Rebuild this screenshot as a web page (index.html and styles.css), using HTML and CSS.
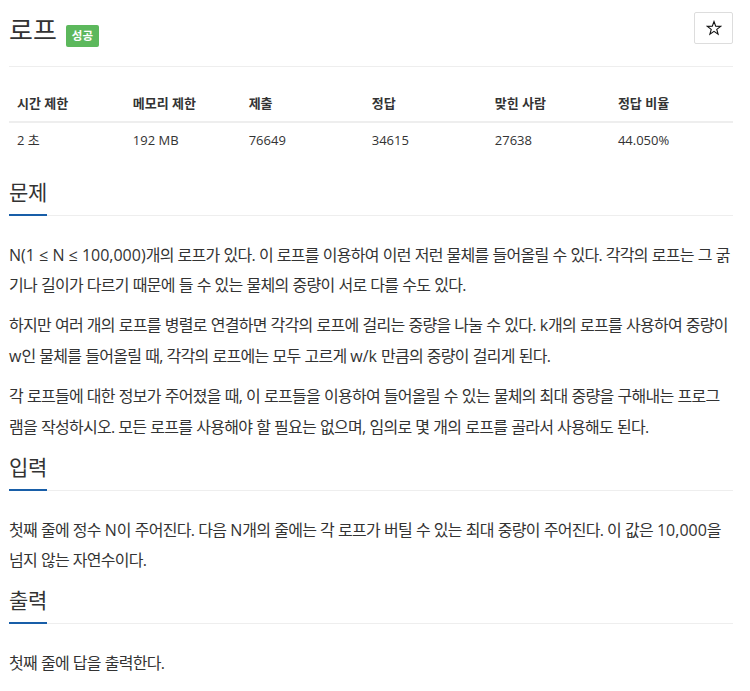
FILE: index.html
```html
<!DOCTYPE html>
<html lang="ko">
<head>
<meta charset="utf-8">
<title>로프</title>
<link rel="stylesheet" href="styles.css">
</head>
<body>
<div class="page">
  <div class="page-header">
    <div class="title">
      <h1>로프</h1>
      <span class="badge">성공</span>
    </div>
    <button class="star-btn" type="button" aria-label="즐겨찾기">
      <svg width="16" height="16" viewBox="0 0 16 16" aria-hidden="true"><polygon points="8,1.5 9.7,6.15 14.66,6.34 10.76,9.4 12.11,14.16 8,11.4 3.89,14.16 5.24,9.4 1.34,6.34 6.3,6.15" fill="none" stroke="#111" stroke-width="1.1" stroke-linejoin="miter"/></svg>
    </button>
  </div>

  <table class="info">
    <thead>
      <tr>
        <th class="c16">시간 제한</th>
        <th class="c16">메모리 제한</th>
        <th class="c17">제출</th>
        <th class="c17">정답</th>
        <th class="c17">맞힌 사람</th>
        <th class="c17">정답 비율</th>
      </tr>
    </thead>
    <tbody>
      <tr>
        <td>2 초</td>
        <td>192 MB</td>
        <td>76649</td>
        <td>34615</td>
        <td>27638</td>
        <td>44.050%</td>
      </tr>
    </tbody>
  </table>

  <section class="section">
    <h2 class="headline"><span>문제</span></h2>
    <p><span class="en">N(1 ≤ N ≤ 100,000)</span>개의 로프가 있다. 이 로프를 이용하여 이런 저런 물체를 들어올릴 수 있다. 각각의 로프는 그 굵<br>기나 길이가 다르기 때문에 들 수 있는 물체의 중량이 서로 다를 수도 있다.</p>
    <p>하지만 여러 개의 로프를 병렬로 연결하면 각각의 로프에 걸리는 중량을 나눌 수 있다. <span class="en">k</span>개의 로프를 사용하여 중량이<br><span class="en">w</span>인 물체를 들어올릴 때, 각각의 로프에는 모두 고르게 <span class="en">w/k</span> 만큼의 중량이 걸리게 된다.</p>
    <p>각 로프들에 대한 정보가 주어졌을 때, 이 로프들을 이용하여 들어올릴 수 있는 물체의 최대 중량을 구해내는 프로그<br>램을 작성하시오. 모든 로프를 사용해야 할 필요는 없으며, 임의로 몇 개의 로프를 골라서 사용해도 된다.</p>
  </section>

  <section class="section">
    <h2 class="headline"><span>입력</span></h2>
    <p>첫째 줄에 정수 <span class="en">N</span>이 주어진다. 다음 <span class="en">N</span>개의 줄에는 각 로프가 버틸 수 있는 최대 중량이 주어진다. 이 값은 <span class="en">10,000</span>을<br>넘지 않는 자연수이다.</p>
  </section>

  <section class="section">
    <h2 class="headline"><span>출력</span></h2>
    <p>첫째 줄에 답을 출력한다.</p>
  </section>
</div>
</body>
</html>
```

FILE: styles.css
```css
html, body {
  margin: 0;
  padding: 0;
  background: #fff;
}

body {
  font-family: "Open Sans", "Noto Sans CJK KR", sans-serif;
  color: #333;
}

.page {
  width: 724px;
  padding: 0 17px 0 9px;
}

/* header */
.page-header {
  display: flex;
  justify-content: space-between;
  align-items: flex-start;
  height: 54px;
  padding-top: 12px;
  border-bottom: 1px solid #eee;
}

.title {
  display: flex;
  align-items: flex-start;
  gap: 9px;
}

.title h1 {
  margin: 0;
  font-size: 26px;
  font-weight: 400;
  line-height: 36px;
  color: #333;
}

.badge {
  display: inline-block;
  margin-top: 13px;
  height: 22px;
  padding: 0 6px;
  line-height: 22px;
  font-size: 11.5px;
  font-weight: 700;
  color: #fff;
  background: #5cb85c;
  border-radius: 2px;
}

.star-btn {
  box-sizing: border-box;
  width: 39px;
  height: 32px;
  padding: 0;
  margin: 0;
  border: 1px solid #ddd;
  border-radius: 2px;
  background: #fff;
  display: flex;
  align-items: center;
  justify-content: center;
}

.star-btn svg {
  display: block;
}

/* info table */
.info {
  width: 100%;
  margin: 19px 0 20px;
  border-collapse: collapse;
  font-size: 13px;
  line-height: 18.57px;
}

.info th {
  text-align: left;
  padding: 8px;
  font-weight: 700;
  border-bottom: 2px solid #eee;
}

.info td {
  text-align: left;
  padding: 8px;
}

.c16 { width: 16%; }
.c17 { width: 17%; }

/* sections */
.headline {
  display: flex;
  margin: 0 0 23.5px;
  border-bottom: 1px solid #eee;
  font-size: 21px;
  font-weight: 400;
  letter-spacing: -0.3px;
  color: #333;
}

.headline span {
  display: block;
  line-height: 30px;
  padding-bottom: 7px;
  margin-bottom: -1px;
  border-bottom: 2px solid #185ea8;
}

.section p {
  margin: 0 0 10px;
  font-size: 16px;
  line-height: 30.4px;
  letter-spacing: -0.72px;
  word-spacing: 0.5px;
  color: #333;
}

.section .en {
  letter-spacing: 0;
  word-spacing: 0;
}
```
